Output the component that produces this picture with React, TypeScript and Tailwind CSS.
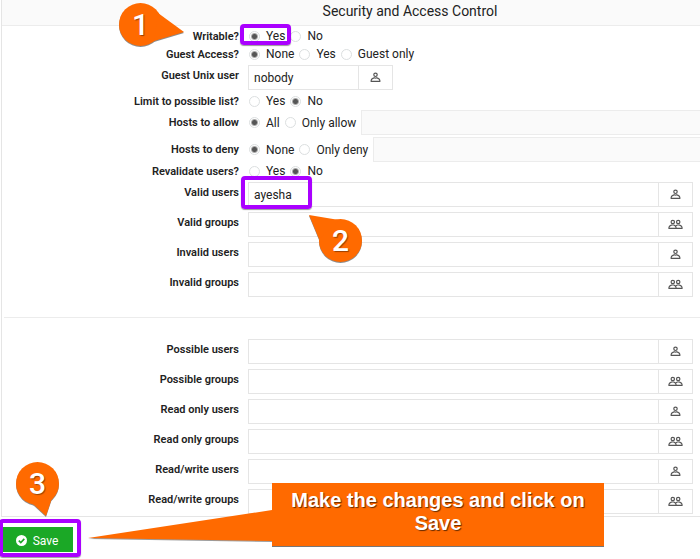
import React from 'react';

type PickerKind = 'user' | 'group';

const userFields: { label: string; kind: PickerKind; value?: string; marked?: boolean }[] = [
  { label: 'Valid users', kind: 'user', value: 'ayesha', marked: true },
  { label: 'Valid groups', kind: 'group' },
  { label: 'Invalid users', kind: 'user' },
  { label: 'Invalid groups', kind: 'group' },
];

const accessFields: { label: string; kind: PickerKind; value?: string }[] = [
  { label: 'Possible users', kind: 'user' },
  { label: 'Possible groups', kind: 'group' },
  { label: 'Read only users', kind: 'user' },
  { label: 'Read only groups', kind: 'group' },
  { label: 'Read/write users', kind: 'user' },
  { label: 'Read/write groups', kind: 'group' },
];

function toId(label: string) {
  return label.toLowerCase().replace(/[^a-z]+/g, '-');
}

function PersonIcon() {
  return (
    <svg width="11" height="11" viewBox="0 0 11 11" fill="none" stroke="#555" strokeWidth="1.2">
      <circle cx="5.5" cy="2.8" r="1.7" />
      <path d="M1.2 9.4V8.2C1.2 7 3 6.4 4.2 5.7Q5.5 6.4 6.8 5.7C8 6.4 9.8 7 9.8 8.2V9.4Z" />
    </svg>
  );
}

function PeopleIcon() {
  return (
    <svg width="15" height="11" viewBox="0 0 15 11" fill="none" stroke="#555" strokeWidth="1.2">
      <circle cx="4.8" cy="3" r="1.7" />
      <circle cx="10.2" cy="3" r="1.7" />
      <path d="M1 9.4V8.2C1 7.1 2.6 6.5 3.7 6H5.7C6.5 6.5 8 7.1 8 8.2V9.4Z" />
      <path d="M8 9.4H14V8.2C14 7.1 12.4 6.5 11.3 6H9.3L7.4 7.1" />
    </svg>
  );
}

function PickerButton({ kind, label }: { kind: PickerKind; label: string }) {
  return (
    <button
      type="button"
      aria-label={`Choose ${label}`}
      className="flex w-[35px] shrink-0 items-center justify-center border border-[#e5e5e5] bg-white"
    >
      {kind === 'user' ? <PersonIcon /> : <PeopleIcon />}
    </button>
  );
}

function Highlight({ className }: { className: string }) {
  return (
    <span
      className={`pointer-events-none absolute rounded-[4px] border-4 border-[#aa00ff] shadow-[0_1px_1px_rgba(0,0,0,0.4)] ${className}`}
    />
  );
}

function RadioRow({
  label,
  options,
  checked,
  marked,
  withInput,
}: {
  label: string;
  options: string[];
  checked: string;
  marked?: boolean;
  withInput?: boolean;
}) {
  const name = toId(label);
  return (
    <div role="radiogroup" aria-labelledby={name} className="flex gap-[9px]">
      <span
        id={name}
        className={`-mb-0.5 w-[237px] shrink-0 text-right text-[11px] leading-5 font-semibold ${withInput ? 'pt-[3px]' : ''}`}
      >
        {label}
      </span>
      <div className="relative flex flex-1 items-center gap-[5px] pl-px">
        {options.map((option) => (
          <label key={option} className="flex items-center gap-[6px] whitespace-nowrap">
            <input
              type="radio"
              name={name}
              defaultChecked={option === checked}
              className="h-[11px] w-[11px] appearance-none rounded-full border border-[#dcdfe0] bg-white checked:bg-[radial-gradient(circle,#555_0_2px,#fff_4px)]"
            />
            {option}
          </label>
        ))}
        {withInput && (
          <input
            type="text"
            disabled
            aria-label={`${label} list`}
            className="h-[25px] min-w-0 flex-1 border-y border-l border-[#ececec] bg-[#fafafa]"
          />
        )}
        {marked && <Highlight className="-left-2 -top-[3px] h-[21px] w-[51px]" />}
      </div>
    </div>
  );
}

function InputRow({
  label,
  kind,
  value,
  marked,
  short,
}: {
  label: string;
  kind: PickerKind;
  value?: string;
  marked?: boolean;
  short?: boolean;
}) {
  const id = toId(label);
  return (
    <div className="flex gap-[9px] py-0.5 pr-[7px]">
      <label
        htmlFor={id}
        className="w-[237px] shrink-0 pt-px text-right text-[11px] leading-5 font-semibold"
      >
        {label}
      </label>
      <div className={`relative flex h-[25px] ${short ? 'w-[145px]' : 'flex-1'}`}>
        <input
          id={id}
          type="text"
          defaultValue={value}
          className="min-w-0 flex-1 border-y border-l border-[#e5e5e5] bg-white px-[5px]"
        />
        <PickerButton kind={kind} label={label} />
        {marked && <Highlight className="-left-[7px] -top-[6px] h-[33px] w-[71px]" />}
      </div>
    </div>
  );
}

function Pin({ digit, tail, className }: { digit: string; tail: string; className: string }) {
  return (
    <div
      className={`pointer-events-none absolute flex h-[43px] w-[43px] items-center justify-center ${className}`}
    >
      <svg
        className="absolute inset-0 h-full w-full overflow-visible drop-shadow-[0_1px_0_rgba(90,90,90,0.7)]"
        viewBox="0 0 43 43"
        fill="#ff6a00"
      >
        <circle cx="21.5" cy="21.5" r="21.5" />
        <path d={tail} />
      </svg>
      <span className="relative text-[30px] leading-none font-medium text-white [text-shadow:1px_1px_1px_rgba(0,0,0,0.4)]">
        {digit}
      </span>
    </div>
  );
}

export default function App() {
  return (
    <main className="relative overflow-hidden bg-white font-[Roboto,sans-serif] text-[12px] leading-[18px] text-[#222]">
      <section className="ml-px border-b border-l border-[#e5e5e5]">
        <h2 className="h-[26px] border-b border-[#ececec] bg-[#fafafa] pl-[118px] text-center text-[14px] leading-[22px]">
          Security and Access Control
        </h2>

        <form className="pt-px">
          <RadioRow label="Writable?" options={['Yes', 'No']} checked="Yes" marked />
          <RadioRow label="Guest Access?" options={['None', 'Yes', 'Guest only']} checked="None" />
          <InputRow label="Guest Unix user" kind="user" value="nobody" short />
          <RadioRow label="Limit to possible list?" options={['Yes', 'No']} checked="No" />
          <div className="flex flex-col gap-0.5">
            <RadioRow label="Hosts to allow" options={['All', 'Only allow']} checked="All" withInput />
            <RadioRow label="Hosts to deny" options={['None', 'Only deny']} checked="None" withInput />
          </div>
          <RadioRow label="Revalidate users?" options={['Yes', 'No']} checked="No" />

          <div className="flex flex-col gap-px">
            {userFields.map((field) => (
              <InputRow key={field.label} {...field} />
            ))}
          </div>

          <hr className="mb-[19px] ml-0.5 mt-[18px] border-[#ececec]" />

          <div className="flex flex-col gap-px">
            {accessFields.map((field) => (
              <InputRow key={field.label} {...field} />
            ))}
          </div>
        </form>
      </section>

      <div className="relative ml-[3px] mt-[10px] w-[70px] pb-2">
        <button
          type="button"
          className="flex h-[25px] w-full items-center justify-center gap-[6px] bg-[#1ba826] pr-0.5 pt-0.5 text-white"
        >
          <svg width="11" height="11" viewBox="0 0 11 11">
            <circle cx="5.5" cy="5.5" r="5.5" fill="#fff" />
            <path d="M2.8 5.6 4.8 7.6 8.3 3.9" fill="none" stroke="#1ba826" strokeWidth="1.6" />
          </svg>
          Save
        </button>
        <Highlight className="-left-[4px] -top-2 h-[38px] w-[82px]" />
      </div>

      <Pin digit="1" className="left-[119px] top-[3px]" tail="M39 10 65 29 35 38Z" />
      <Pin digit="2" className="left-[319px] top-[219px]" tail="M0 20-10-4 14 0 21 1Z" />
      <Pin digit="3" className="left-[16px] top-[462px]" tail="M36 36 30 54 17 42Z" />

      <div className="pointer-events-none absolute left-[272px] top-[483px] w-[332px] bg-[#ff6a00] px-4 pb-[11px] pt-[6px] text-center font-['Liberation_Sans',sans-serif] text-[20px] font-bold leading-[23px] text-white shadow-[0_1px_0_#777] [text-shadow:1px_1px_1px_rgba(0,0,0,0.6)]">
        <svg
          className="absolute right-full top-[26px] drop-shadow-[0_1px_0_rgba(90,90,90,0.6)]"
          width="184"
          height="33"
          viewBox="0 0 184 33"
          fill="#ff6a00"
        >
          <path d="M0 29 184 1V32Z" />
        </svg>
        Make the changes and click on Save
      </div>
    </main>
  );
}
